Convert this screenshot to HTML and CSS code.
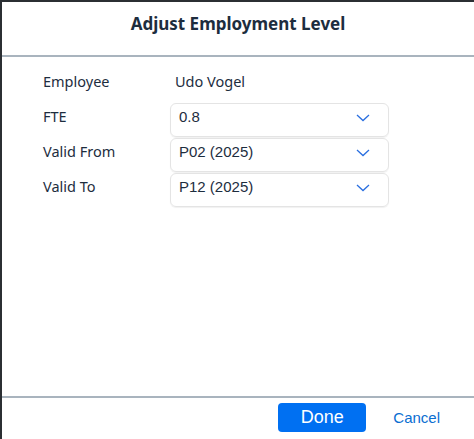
FILE: index.html
```html
<!DOCTYPE html>
<html lang="en">
<head>
<meta charset="utf-8">
<title>Adjust Employment Level</title>
<link rel="stylesheet" href="styles.css">
</head>
<body>
<div class="dialog">
  <header class="dialog-header">
    <h1 class="dialog-title">Adjust Employment Level</h1>
  </header>
  <main class="dialog-content">
    <div class="form">
      <div class="row">
        <div class="label">Employee</div>
        <div class="text-value">Udo Vogel</div>
      </div>
      <div class="row">
        <div class="label">FTE</div>
        <div class="select">
          <span class="select-value">0.8</span>
          <svg class="chevron" width="14" height="8" viewBox="0 0 14 8"><path d="M1 1 L7 6.5 L13 1" fill="none" stroke="#2a6fe0" stroke-width="1.3"/></svg>
        </div>
      </div>
      <div class="row">
        <div class="label">Valid From</div>
        <div class="select">
          <span class="select-value">P02 (2025)</span>
          <svg class="chevron" width="14" height="8" viewBox="0 0 14 8"><path d="M1 1 L7 6.5 L13 1" fill="none" stroke="#2a6fe0" stroke-width="1.3"/></svg>
        </div>
      </div>
      <div class="row">
        <div class="label">Valid To</div>
        <div class="select">
          <span class="select-value">P12 (2025)</span>
          <svg class="chevron" width="14" height="8" viewBox="0 0 14 8"><path d="M1 1 L7 6.5 L13 1" fill="none" stroke="#2a6fe0" stroke-width="1.3"/></svg>
        </div>
      </div>
    </div>
  </main>
  <footer class="dialog-footer">
    <button class="btn-primary">Done</button>
    <button class="btn-link">Cancel</button>
  </footer>
</div>
</body>
</html>
```

FILE: styles.css
```css
html, body {
  margin: 0;
  padding: 0;
}
body {
  background: #2b2f33;
  padding: 2px 0 0 2px;
  width: 472px;
  height: 437px;
  overflow: hidden;
}
.dialog {
  background: #ffffff;
  width: 472px;
  height: 437px;
  display: flex;
  flex-direction: column;
  font-family: "Noto Sans", sans-serif;
  color: #1d2d3e;
}
.dialog-header {
  height: 53px;
  border-bottom: 2px solid #a9b4be;
  display: flex;
  align-items: flex-start;
  justify-content: center;
  flex-shrink: 0;
}
.dialog-title {
  margin: 0;
  padding-top: 11px;
  font-size: 17px;
  line-height: 22px;
  font-weight: 700;
  color: #1d2d3e;
}
.dialog-content {
  flex: 1;
  padding: 11px 0 0 41px;
}
.form {
  display: flex;
  flex-direction: column;
}
.row {
  display: flex;
  height: 35px;
}
.label {
  width: 127px;
  padding-top: 3px;
  font-size: 14.5px;
  line-height: 20px;
  color: #1d2d3e;
}
.text-value {
  padding: 3px 0 0 5px;
  font-size: 14.5px;
  line-height: 20px;
}
.select {
  box-sizing: border-box;
  width: 219px;
  height: 34px;
  border: 1px solid #e4e4e4;
  border-radius: 6px;
  box-shadow: 0 1px 1px rgba(0,0,0,0.06);
  display: flex;
  justify-content: space-between;
  align-items: flex-start;
  padding: 3px 18px 0 8px;
}
.select-value {
  font-family: "Liberation Sans", Arial, sans-serif;
  font-size: 15px;
  line-height: 20px;
  color: #1d2d3e;
}
.chevron {
  margin-top: 7px;
}
.dialog-footer {
  height: 41px;
  border-top: 2px solid #a9b4be;
  display: flex;
  justify-content: flex-end;
  align-items: flex-start;
  flex-shrink: 0;
}
.btn-primary {
  margin-top: 5px;
  width: 88px;
  height: 29px;
  border: none;
  border-radius: 4px;
  background: #0070f2;
  color: #ffffff;
  font-family: "Liberation Sans", Arial, sans-serif;
  font-size: 18px;
  line-height: 29px;
  padding: 0;
}
.btn-link {
  margin: 5px 34px 0 27px;
  height: 29px;
  border: none;
  background: transparent;
  color: #0a6ed1;
  font-family: "Liberation Sans", Arial, sans-serif;
  font-size: 15px;
  line-height: 29px;
  padding: 0;
}
```
